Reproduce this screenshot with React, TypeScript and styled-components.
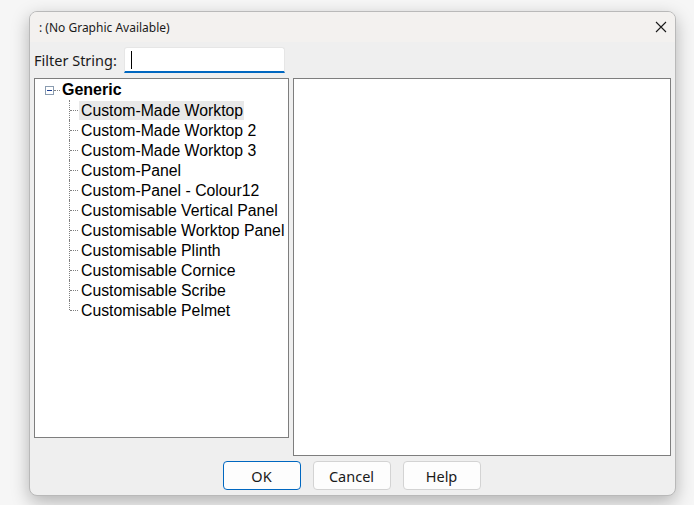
import React from 'react';
import styled, { createGlobalStyle } from 'styled-components';

const GlobalStyle = createGlobalStyle`
	html, body {
		margin: 0;
		padding: 0;
		background: #f6f6f6;
	}
	#root {
		width: 694px;
		height: 505px;
		overflow: hidden;
	}
`;

const Dialog = styled.div`
	margin: 11px 0 0 29px;
	width: 647px;
	height: 485px;
	box-sizing: border-box;
	border: 1px solid #b9b9b9;
	border-radius: 8px;
	background: #efefef;
	box-shadow: 0 6px 18px rgba(0, 0, 0, 0.28);
	display: flex;
	flex-direction: column;
	overflow: hidden;
`;

const TitleBar = styled.div`
	height: 30px;
	flex: none;
	background: #f3f1ef;
	display: flex;
	align-items: center;
	justify-content: space-between;
	padding: 0 7px 0 9px;
	font-family: "Noto Sans", "Open Sans", sans-serif;
	font-size: 12px;
	color: #1a1a1a;
`;

const CloseButton = styled.div`
	width: 14px;
	height: 14px;
	display: flex;
	align-items: center;
	justify-content: center;
`;

const Body = styled.div`
	flex: 1;
	display: flex;
	flex-direction: column;
	padding: 5px 4px 5px 4px;
	gap: 5px;
`;

const FilterRow = styled.div`
	display: flex;
	align-items: center;
	height: 26px;
	gap: 6px;
`;

const FilterLabel = styled.label`
	font-family: "Noto Sans", "Open Sans", sans-serif;
	font-size: 14.5px;
	color: #1a1a1a;
	width: 84px;
`;

const FilterInput = styled.div`
	width: 161px;
	height: 26px;
	box-sizing: border-box;
	background: #ffffff;
	border: 1px solid #e6e6e6;
	border-bottom: 2px solid #0067c0;
	border-radius: 3px 3px 0 0;
	display: flex;
	align-items: center;
	padding-left: 6px;
`;

const Caret = styled.span`
	width: 1px;
	height: 18px;
	background: #000;
`;

const Panes = styled.div`
	display: flex;
	gap: 4px;
	align-items: flex-start;
`;

const TreeBox = styled.div`
	width: 255px;
	height: 360px;
	box-sizing: border-box;
	background: #fff;
	border: 1px solid #7e7e7e;
	padding: 1px 0 0 10px;
	font-family: "Liberation Sans", Arial, sans-serif;
	font-size: 15.8px;
	color: #000;
`;

const PreviewBox = styled.div`
	width: 378px;
	height: 378px;
	box-sizing: border-box;
	background: #fff;
	border: 1px solid #7e7e7e;
`;

const RootRow = styled.div`
	display: flex;
	align-items: center;
	height: 20px;
`;

const Expander = styled.span`
	width: 9px;
	height: 9px;
	box-sizing: border-box;
	border: 1px solid #8a9cb0;
	position: relative;
	&::after {
		content: '';
		position: absolute;
		left: 1px;
		top: 3px;
		width: 5px;
		height: 1px;
		background: #1c3f94;
	}
`;

const Connector = styled.span`
	width: 6px;
	margin: 0 2px 0 0;
	border-top: 1px dotted #808080;
`;

const RootLabel = styled.span`
	font-weight: bold;
	font-size: 16px;
`;

const Children = styled.ul`
	list-style: none;
	margin: 0 0 0 24px;
	padding: 0;
`;

const Item = styled.li<{ $last?: boolean }>`
	position: relative;
	height: 20px;
	display: flex;
	align-items: center;
	padding-left: 10px;
	&::before {
		content: '';
		position: absolute;
		left: 0;
		top: 0;
		height: ${p => (p.$last ? '10px' : '20px')};
		border-left: 1px dotted #808080;
	}
	&::after {
		content: '';
		position: absolute;
		left: 1px;
		top: 10px;
		width: 8px;
		border-top: 1px dotted #808080;
	}
`;

const ItemLabel = styled.span<{ $selected?: boolean }>`
	padding: 0 1px 0 2px;
	line-height: 19px;
	background: ${p => (p.$selected ? '#e8e8e8' : 'transparent')};
	white-space: nowrap;
`;

const ButtonRow = styled.div`
	display: flex;
	justify-content: center;
	gap: 12px;
	padding-right: 2px;
`;

const Button = styled.button<{ $primary?: boolean }>`
	width: 78px;
	height: 29px;
	box-sizing: border-box;
	background: #fdfdfd;
	border: 1px solid ${p => (p.$primary ? '#0067c0' : '#d3d3d3')};
	border-radius: 4px;
	font-family: "Noto Sans", "Open Sans", sans-serif;
	font-size: 14.5px;
	color: #1a1a1a;
	padding: 0;
`;

const items = [
	'Custom-Made Worktop',
	'Custom-Made Worktop 2',
	'Custom-Made Worktop 3',
	'Custom-Panel',
	'Custom-Panel - Colour12',
	'Customisable Vertical Panel',
	'Customisable Worktop Panel',
	'Customisable Plinth',
	'Customisable Cornice',
	'Customisable Scribe',
	'Customisable Pelmet',
];

export default function App() {
	return (
		<>
			<GlobalStyle />
			<Dialog>
				<TitleBar>
					<span>: (No Graphic Available)</span>
					<CloseButton>
						<svg width="12" height="12" viewBox="0 0 12 12">
							<path d="M1 1L11 11M11 1L1 11" stroke="#1a1a1a" strokeWidth="1.1" fill="none" />
						</svg>
					</CloseButton>
				</TitleBar>
				<Body>
					<FilterRow>
						<FilterLabel>Filter String:</FilterLabel>
						<FilterInput>
							<Caret />
						</FilterInput>
					</FilterRow>
					<Panes>
						<TreeBox>
							<RootRow>
								<Expander />
								<Connector />
								<RootLabel>Generic</RootLabel>
							</RootRow>
							<Children>
								{items.map((name, i) => (
									<Item key={name} $last={i === items.length - 1}>
										<ItemLabel $selected={i === 0}>{name}</ItemLabel>
									</Item>
								))}
							</Children>
						</TreeBox>
						<PreviewBox />
					</Panes>
					<ButtonRow>
						<Button $primary>OK</Button>
						<Button>Cancel</Button>
						<Button>Help</Button>
					</ButtonRow>
				</Body>
			</Dialog>
		</>
	);
}
